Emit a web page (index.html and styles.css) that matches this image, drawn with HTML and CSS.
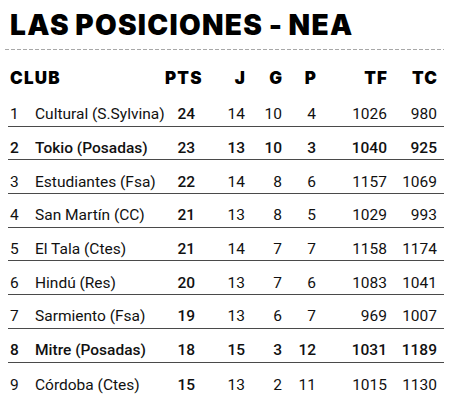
FILE: index.html
```html
<!DOCTYPE html>
<html lang="es">
<head>
<meta charset="utf-8">
<title>Las posiciones - NEA</title>
<link rel="stylesheet" href="styles.css">
</head>
<body>
<div class="page">
  <h1 class="title">LAS POSICIONES - NEA</h1>
  <div class="dash"></div>
  <div class="table">
    <div class="row head">
      <span class="club">CLUB</span><span class="num">PTS</span><span class="num">J</span><span class="num">G</span><span class="num">P</span><span class="num">TF</span><span class="num">TC</span>
    </div>
    <div class="row line"><span>1</span><span class="club">Cultural (S.Sylvina)</span><span class="num pts">24</span><span class="num">14</span><span class="num">10</span><span class="num">4</span><span class="num">1026</span><span class="num">980</span></div>
    <div class="row line strong"><span>2</span><span class="club">Tokio (Posadas)</span><span class="num pts">23</span><span class="num">13</span><span class="num">10</span><span class="num">3</span><span class="num">1040</span><span class="num">925</span></div>
    <div class="row line"><span>3</span><span class="club">Estudiantes (Fsa)</span><span class="num pts">22</span><span class="num">14</span><span class="num">8</span><span class="num">6</span><span class="num">1157</span><span class="num">1069</span></div>
    <div class="row line"><span>4</span><span class="club">San Martín (CC)</span><span class="num pts">21</span><span class="num">13</span><span class="num">8</span><span class="num">5</span><span class="num">1029</span><span class="num">993</span></div>
    <div class="row line"><span>5</span><span class="club">El Tala (Ctes)</span><span class="num pts">21</span><span class="num">14</span><span class="num">7</span><span class="num">7</span><span class="num">1158</span><span class="num">1174</span></div>
    <div class="row line"><span>6</span><span class="club">Hindú (Res)</span><span class="num pts">20</span><span class="num">13</span><span class="num">7</span><span class="num">6</span><span class="num">1083</span><span class="num">1041</span></div>
    <div class="row line"><span>7</span><span class="club">Sarmiento (Fsa)</span><span class="num pts">19</span><span class="num">13</span><span class="num">6</span><span class="num">7</span><span class="num">969</span><span class="num">1007</span></div>
    <div class="row line strong"><span>8</span><span class="club">Mitre (Posadas)</span><span class="num pts">18</span><span class="num">15</span><span class="num">3</span><span class="num">12</span><span class="num">1031</span><span class="num">1189</span></div>
    <div class="row"><span>9</span><span class="club">Córdoba (Ctes)</span><span class="num pts">15</span><span class="num">13</span><span class="num">2</span><span class="num">11</span><span class="num">1015</span><span class="num">1130</span></div>
  </div>
</div>
</body>
</html>
```

FILE: styles.css
```css
html, body {
  margin: 0;
  padding: 0;
  background: #ffffff;
}

.page {
  width: 450px;
  height: 401px;
  overflow: hidden;
  color: #111111;
}

.title {
  margin: 0;
  padding: 11px 0 0 10px;
  font-family: "Inter", "DejaVu Sans", sans-serif;
  font-weight: 900;
  font-size: 28px;
  line-height: 28px;
  letter-spacing: 1.3px;
  word-spacing: -1.5px;
  color: #000000;
}

.dash {
  margin: 10px 6px 0 5px;
  height: 1px;
  background: repeating-linear-gradient(to right, #a8a8a8 0 4px, transparent 4px 6px);
}

.table {
  padding: 0 6px 0 8px;
  font-family: "Roboto", "Liberation Sans", sans-serif;
  font-size: 15.5px;
  color: #111111;
}

.row {
  display: grid;
  grid-template-columns: 27px 130px 30px 50px 37px 34px 71px 50px 7px;
  align-items: end;
  box-sizing: border-box;
  height: 33.7px;
  line-height: 1;
  padding-bottom: 3px;
}

.row .num {
  text-align: right;
}

.row span:first-child {
  padding-left: 2px;
}

.row.line {
  border-bottom: 1.5px solid #4a4a4a;
}

.row.head {
  height: auto;
  margin-top: 20px;
  padding-bottom: 6px;
  font-family: "Inter", "DejaVu Sans", sans-serif;
  font-weight: 900;
  font-size: 17px;
  letter-spacing: 1.2px;
  color: #000000;
}

.row.head .num {
  margin-right: -1.2px;
}

.row.head .club {
  grid-column: 1 / 3;
}

.pts {
  font-weight: 500;
}

.row.strong {
  font-weight: 500;
}
```
